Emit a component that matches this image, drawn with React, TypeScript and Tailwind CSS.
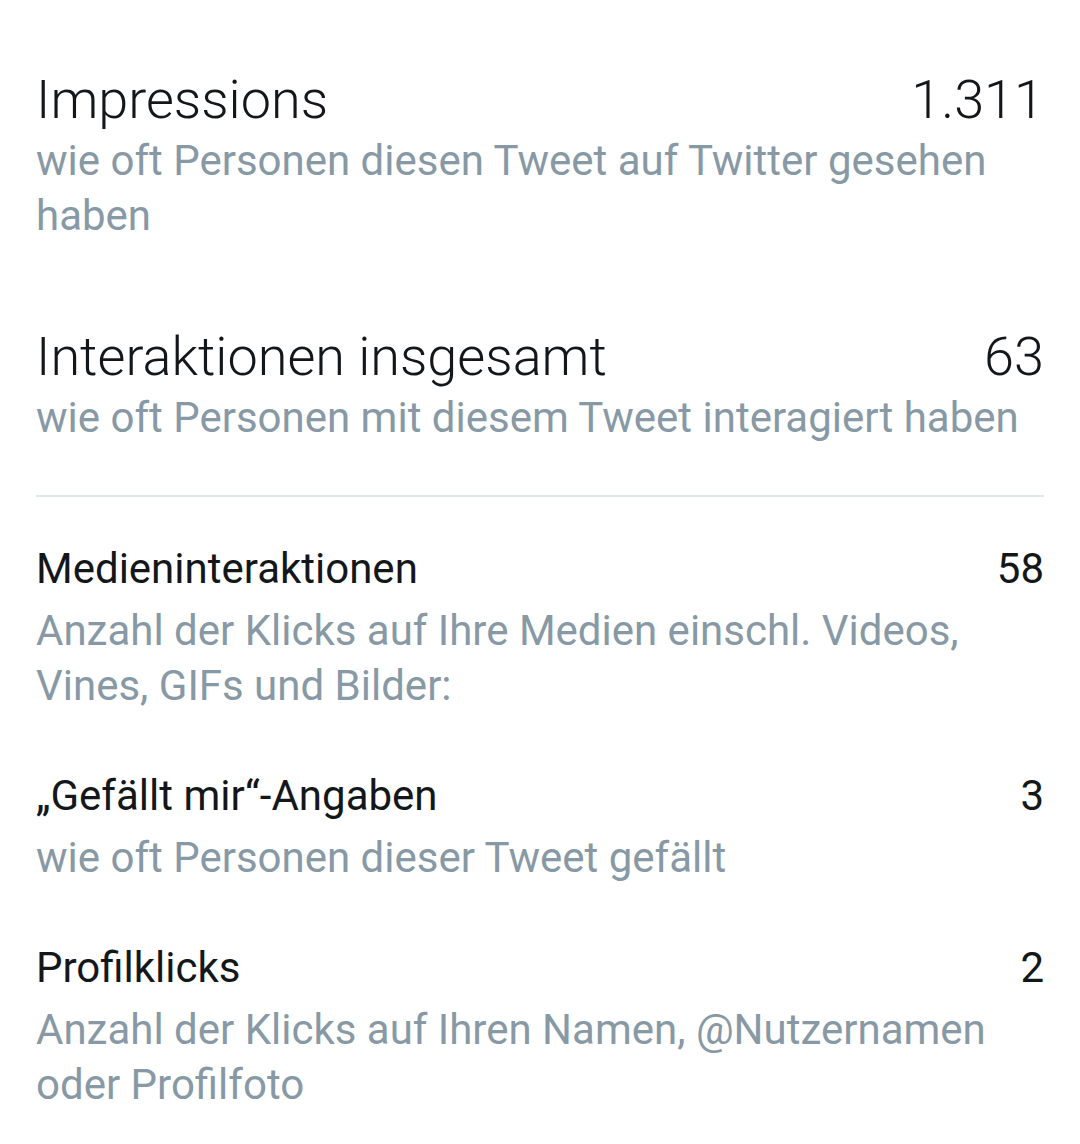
import React from "react";

const font = { fontFamily: "Roboto, 'Noto Sans', sans-serif" };

function BigRow({ title, value, desc }: { title: string; value: string; desc: string }) {
  return (
    <div className="flex flex-col">
      <div className="flex items-baseline justify-between text-[54px] leading-[60px] font-light text-[#14171a]">
        <span>{title}</span>
        <span>{value}</span>
      </div>
      <p className="mt-[3px] text-[42px] leading-[55px] text-[#8899a6]">{desc}</p>
    </div>
  );
}

function SmallRow({ title, value, desc }: { title: string; value: string; desc: string }) {
  return (
    <div className="flex flex-col">
      <div className="flex items-baseline justify-between text-[42px] leading-[48px] text-[#14171a]">
        <span>{title}</span>
        <span>{value}</span>
      </div>
      <p className="mt-[10px] text-[42px] leading-[55px] text-[#8899a6]">{desc}</p>
    </div>
  );
}

export default function App() {
  return (
    <div className="w-[1080px] h-[1144px] bg-white overflow-hidden" style={font}>
      <div className="px-[36px] pt-[70px] flex flex-col">
        <BigRow
          title="Impressions"
          value="1.311"
          desc="wie oft Personen diesen Tweet auf Twitter gesehen haben"
        />
        <div className="mt-[84px]">
          <BigRow
            title="Interaktionen insgesamt"
            value="63"
            desc="wie oft Personen mit diesem Tweet interagiert haben"
          />
        </div>
        <div className="mt-[50px] h-[2px] bg-[#e1e8ed]" />
        <div className="mt-[48px]">
          <SmallRow
            title="Medieninteraktionen"
            value="58"
            desc="Anzahl der Klicks auf Ihre Medien einschl. Videos, Vines, GIFs und Bilder:"
          />
        </div>
        <div className="mt-[59px]">
          <SmallRow
            title="„Gefällt mir“-Angaben"
            value="3"
            desc="wie oft Personen dieser Tweet gefällt"
          />
        </div>
        <div className="mt-[59px]">
          <SmallRow
            title="Profilklicks"
            value="2"
            desc="Anzahl der Klicks auf Ihren Namen, @Nutzernamen oder Profilfoto"
          />
        </div>
      </div>
    </div>
  );
}
